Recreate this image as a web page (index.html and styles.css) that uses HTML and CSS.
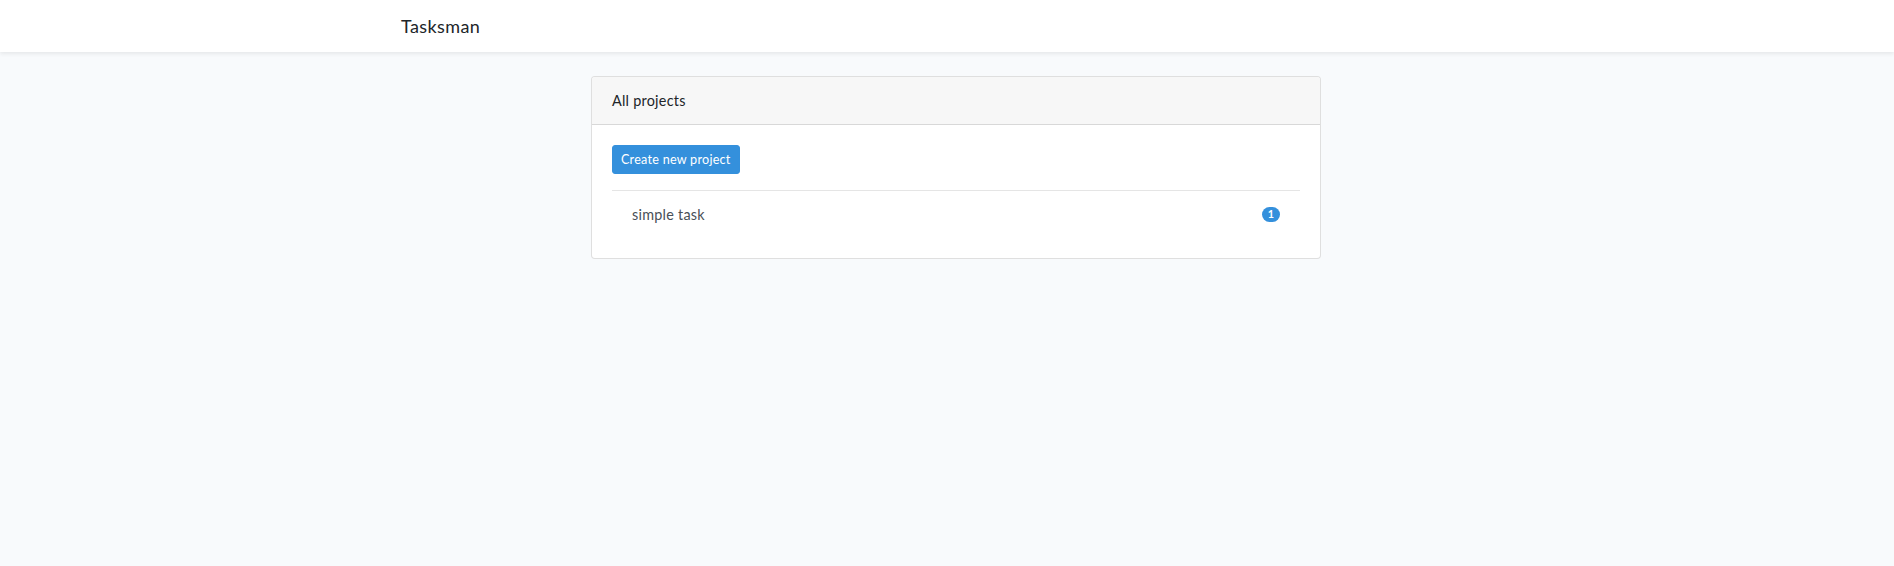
FILE: index.html
```html
<!DOCTYPE html>
<html lang="en">
<head>
<meta charset="utf-8">
<title>Tasksman</title>
<link rel="stylesheet" href="styles.css">
</head>
<body>
<nav class="navbar">
  <div class="container">
    <a class="brand" href="#">Tasksman</a>
  </div>
</nav>
<main class="main">
  <div class="container row">
    <div class="col">
      <div class="card">
        <div class="card-header">All projects</div>
        <div class="card-body">
          <a class="btn" href="#">Create new project</a>
          <hr class="divider">
          <ul class="list">
            <li class="list-item">
              <span class="item-name">simple task</span>
              <span class="badge">1</span>
            </li>
          </ul>
        </div>
      </div>
    </div>
  </div>
</main>
</body>
</html>
```
FILE: styles.css
```css
* { box-sizing: border-box; }
html, body { margin: 0; padding: 0; }
body {
  background: #f8fafc;
  font-family: Lato, "Noto Sans", sans-serif;
  font-size: 14.4px;
  line-height: 1.6;
  color: #212529;
  letter-spacing: 0.25px;
  height: 566px;
}
.container {
  width: 1140px;
  margin-left: calc(50% - 561px);
  padding: 0 15px;
}
.navbar {
  background: #fff;
  height: 52px;
  display: flex;
  align-items: center;
  box-shadow: 0 .125rem .25rem rgba(0,0,0,.075);
}
.brand {
  font-size: 18px;
  color: #212529;
  text-decoration: none;
  line-height: 1;
  display: block;
  letter-spacing: 0.4px;
}
.main { padding-top: 24px; }
.row { display: flex; justify-content: center; }
.col { width: 760px; padding: 0 15px; }
.card {
  background: #fff;
  border: 1px solid rgba(0,0,0,.125);
  border-radius: 4px;
}
.card-header {
  background: #f7f7f7;
  border-bottom: 1px solid rgba(0,0,0,.125);
  padding: 12px 20px;
  line-height: 23px;
  border-radius: 3px 3px 0 0;
}
.card-body { padding: 20px; }
.btn {
  display: inline-block;
  background: #3490dc;
  color: #fff;
  text-decoration: none;
  font-size: 12.6px;
  line-height: 19px;
  padding: 4px 8px;
  border: 1px solid #3490dc;
  border-radius: 3px;
}
.divider {
  border: 0;
  border-top: 1px solid rgba(0,0,0,.1);
  margin: 16px 0 0;
}
.list { list-style: none; margin: 0; padding: 0; }
.list-item {
  display: flex;
  justify-content: space-between;
  align-items: center;
  padding: 12px 16px 12px 20px;
  line-height: 23px;
  color: #495057;
}
.badge {
  background: #3490dc;
  color: #fff;
  font-size: 10.8px;
  font-weight: 700;
  line-height: 1;
  padding: 2px 6px;
  border-radius: 10rem;
  margin-right: 4px;
  letter-spacing: 0;
}
```
